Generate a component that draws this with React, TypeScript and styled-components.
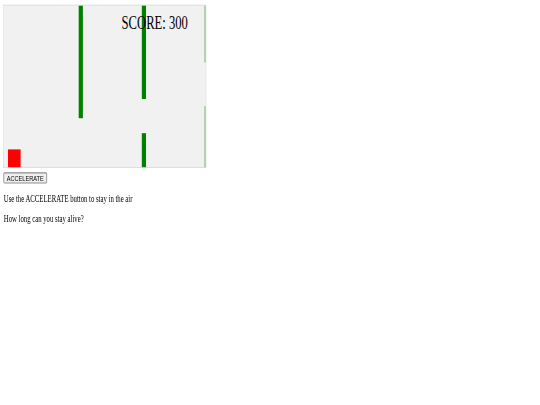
import * as React from 'react';
import styled, { createGlobalStyle } from 'styled-components';

const GlobalStyle = createGlobalStyle`
  html, body {
    margin: 0;
    padding: 0;
    background: #ffffff;
    overflow: hidden;
  }
`;

// the shot was taken squeezed: 0.42 across, 0.6 down
const Stage = styled.main`
  width: 1280px;
  padding: 8px 8px;
  box-sizing: border-box;
  transform: scale(0.4208, 0.6);
  transform-origin: 0 0;
  font-family: 'Liberation Serif', 'Times New Roman', serif;
  font-size: 16px;
  color: #000000;
`;

const Board = styled.div`
  width: 482px;
  height: 272px;
  box-sizing: border-box;
  border: 1px solid #d3d3d3;
  background: #f1f1f1;

  svg {
    display: block;
    width: 480px;
    height: 270px;
  }
`;

const Accelerate = styled.button`
  display: block;
  margin-top: 7px;
  height: 19px;
  padding: 0 6px;
  box-sizing: border-box;
  font-family: 'Liberation Sans', Arial, sans-serif;
  font-size: 13.33px;
  line-height: 15px;
  color: #000000;
  background: #efefef;
  border: 2px solid #8f8f8f;
  border-radius: 3px;
`;

const Note = styled.p`
  margin: 16px 0 0 1px;
  line-height: 18px;
`;

type Obstacle = { x: number; y: number; h: number; fade?: number };

// last pair is only just entering at the right edge
const obstacles: Obstacle[] = [
  { x: 178, y: 0, h: 188 },
  { x: 328, y: 0, h: 156 },
  { x: 328, y: 213, h: 57 },
  { x: 476, y: 0, h: 95, fade: 0.3 },
  { x: 476, y: 168, h: 102, fade: 0.3 },
];

const App = () => (
  <>
    <GlobalStyle />
    <Stage>
      <Board>
        <svg viewBox="0 0 480 270">
          <rect x={10} y={240} width={30} height={30} fill="#ff0000" />
          {obstacles.map((o, i) => (
            <rect
              key={i}
              x={o.x}
              y={o.y}
              width={10}
              height={o.h}
              fill="#008000"
              fillOpacity={o.fade ?? 1}
            />
          ))}
          <text x={280} y={40} fontFamily="'Liberation Serif', serif" fontSize={30} fill="#000000">
            SCORE: 300
          </text>
        </svg>
      </Board>
      <Accelerate>ACCELERATE</Accelerate>
      <Note>Use the ACCELERATE button to stay in the air</Note>
      <Note>How long can you stay alive?</Note>
    </Stage>
  </>
);

export default App;
